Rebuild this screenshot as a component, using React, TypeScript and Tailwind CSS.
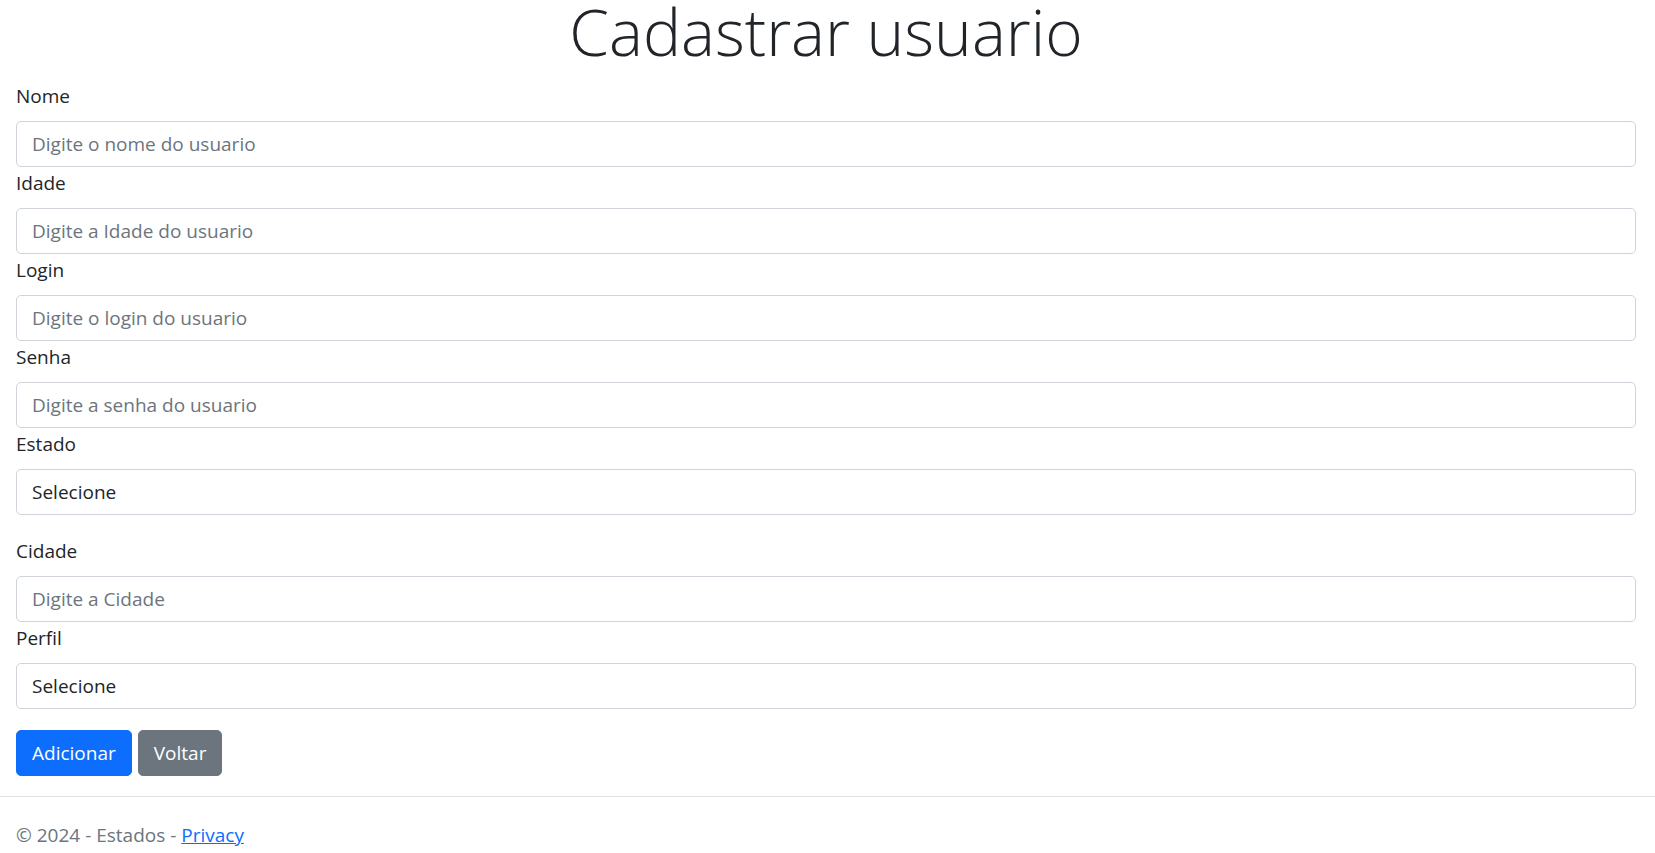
import React from "react";

type Field = {
  label: string;
  kind: "input" | "select";
  placeholder?: string;
  spaced?: boolean;
};

const fields: Field[] = [
  { label: "Nome", kind: "input", placeholder: "Digite o nome do usuario" },
  { label: "Idade", kind: "input", placeholder: "Digite a Idade do usuario" },
  { label: "Login", kind: "input", placeholder: "Digite o login do usuario" },
  { label: "Senha", kind: "input", placeholder: "Digite a senha do usuario" },
  { label: "Estado", kind: "select", spaced: true },
  { label: "Cidade", kind: "input", placeholder: "Digite a Cidade" },
  { label: "Perfil", kind: "select" },
];

const controlClass =
  "block w-full h-[46px] rounded-[5px] border border-[#ced4da] bg-white px-[15px] text-[19px] text-[#212529] outline-none placeholder:text-[#6c757d]";

const App: React.FC = () => {
  return (
    <div className="min-h-screen bg-white text-[#212529] font-['Open_Sans','Noto_Sans',sans-serif] text-[19px]">
      <main className="pl-4 pr-[19px]">
        <h1 className="text-center text-[64px] font-light leading-[64px] mb-[18px]">
          Cadastrar usuario
        </h1>

        <form>
          {fields.map((f) => (
            <div key={f.label} className={f.spaced ? "mb-[22px]" : "mb-[2px]"}>
              <label className="block leading-[29px] mb-[10px]">{f.label}</label>
              {f.kind === "input" ? (
                <input type="text" placeholder={f.placeholder} className={controlClass} />
              ) : (
                <select className={`${controlClass} appearance-none`} defaultValue="">
                  <option value="">Selecione</option>
                </select>
              )}
            </div>
          ))}

          <div className="flex gap-[6px] pt-[19px]">
            <button
              type="button"
              className="h-[46px] rounded-[5px] border border-[#0d6efd] bg-[#0d6efd] px-[15px] text-white"
            >
              Adicionar
            </button>
            <button
              type="button"
              className="h-[46px] rounded-[5px] border border-[#6c757d] bg-[#6c757d] px-[15px] text-white"
            >
              Voltar
            </button>
          </div>
        </form>
      </main>

      <footer className="mt-[20px] border-t border-[#dee2e6] pl-4 pt-[18px] leading-[40px] text-[#6c757d]">
        © 2024 - Estados -{" "}
        <a href="#" className="text-[#0d6efd] underline">
          Privacy
        </a>
      </footer>
    </div>
  );
};

export default App;
